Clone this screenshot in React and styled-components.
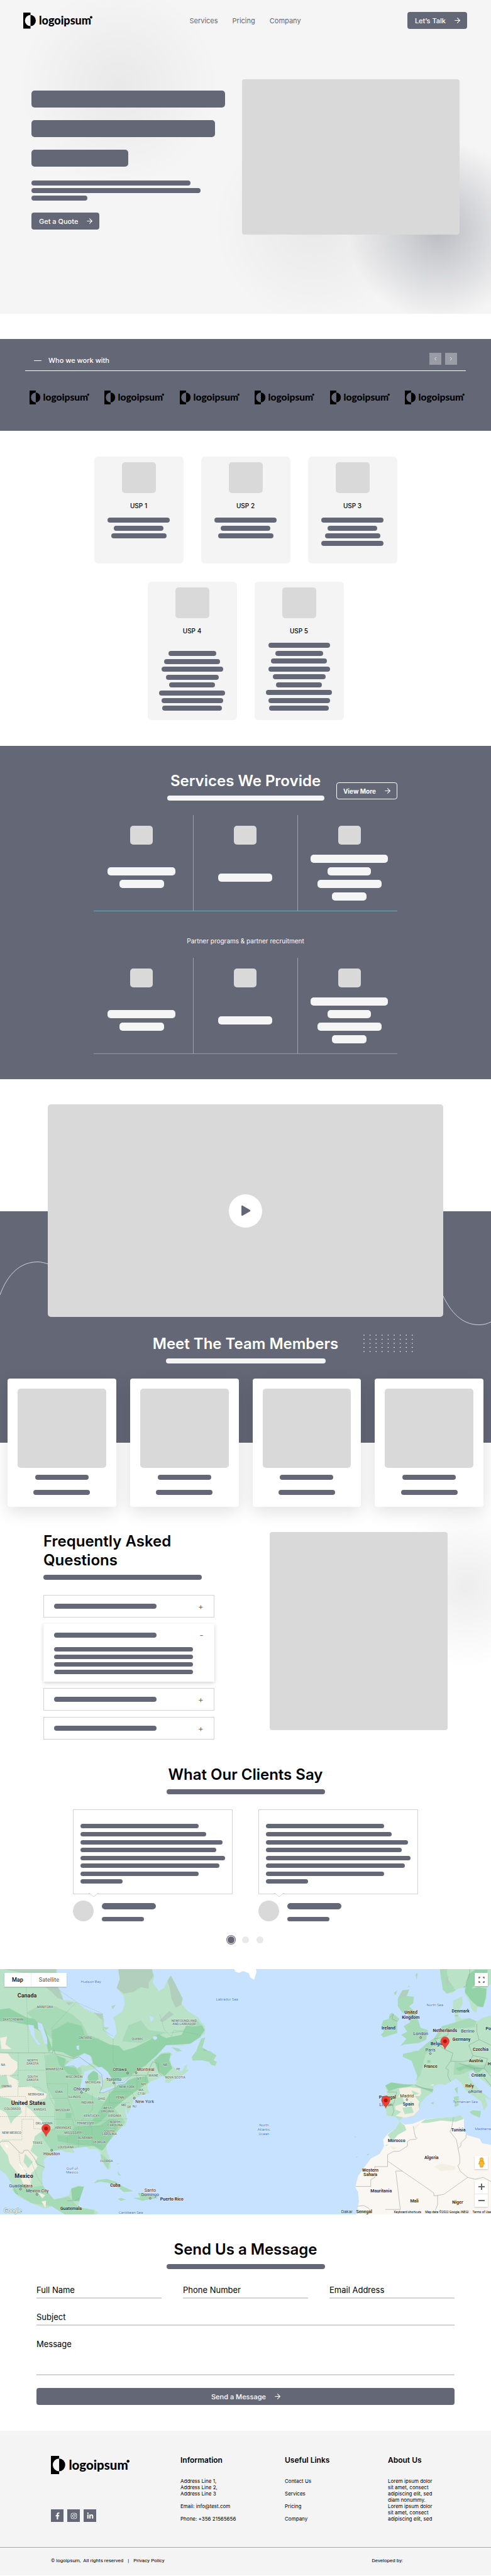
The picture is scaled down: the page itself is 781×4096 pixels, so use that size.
import React from "react";
import styled, { createGlobalStyle } from "styled-components";
import { ArrowRight, ChevronLeft, ChevronRight } from "lucide-react";
import { FaFacebookF, FaInstagram, FaLinkedinIn } from "react-icons/fa";

const slate = "#646776";
const grey = "#d9d9d9";
const mist = "#f5f5f5";
const rule = "#d3d3d3";

const GlobalStyle = createGlobalStyle`
  *, *::before, *::after { box-sizing: border-box; }
  body { margin: 0; background: #fff; color: #000; font-family: Inter, "Liberation Sans", sans-serif; }
  h2, h3, p, ul { margin: 0; padding: 0; }
  ul { list-style: none; }
  button, input, textarea { font: inherit; }
  a { color: inherit; text-decoration: none; }
`;

/* Shared parts */

const Bar = styled.span`
  display: block;
  flex: none;
  width: ${(p) => p.$w}px;
  max-width: 100%;
  height: ${(p) => p.$h || 8}px;
  border-radius: ${(p) => p.$r || 4}px;
  background: ${(p) => (p.$light ? mist : slate)};
`;

const BarStack = styled.div`
  display: flex;
  flex-direction: column;
  justify-content: space-between;
  align-items: ${(p) => (p.$center ? "center" : "flex-start")};
  height: ${(p) => p.$height}px;
  margin-top: ${(p) => p.$top || 0}px;
`;

const Button = styled.button`
  display: inline-flex;
  align-items: center;
  justify-content: center;
  gap: 12px;
  width: ${(p) => (p.$wide ? "100%" : "auto")};
  height: 27px;
  padding: 0 ${(p) => (p.$outline ? 8 : 9)}px 0 ${(p) => (p.$outline ? 10 : 12)}px;
  border: ${(p) => (p.$outline ? "1px solid #fff" : "0")};
  border-radius: 4px;
  background: ${slate};
  color: #fff;
  font-size: ${(p) => (p.$outline ? 10 : 11)}px;
  font-weight: ${(p) => (p.$outline ? 700 : 500)};
  line-height: 14px;
  white-space: nowrap;
`;

const Title = styled.h2`
  font-size: 24px;
  font-weight: 600;
  line-height: 30px;
`;

const Heading = styled.div`
  position: relative;
  display: flex;
  flex-direction: column;
  align-items: ${(p) => (p.$left ? "flex-start" : "center")};
  gap: 8px;
  color: ${(p) => (p.$light ? "#fff" : "#000")};
  text-align: ${(p) => (p.$left ? "left" : "center")};
`;

const LogoSvg = styled.svg`
  display: block;
  width: ${(p) => p.$w}px;
  height: auto;
`;

function Logo({ width }) {
  return (
    <LogoSvg $w={width} viewBox="0 0 110 26" role="img" aria-label="logoipsum">
      <path d="M0 0H11.5V3.8A8.9 8.9 0 0 0 11.5 21.6V25.5H0Z" />
      <path d="M11.5 3.8A8.5 8.9 0 0 1 11.5 21.6Z" />
      <text x="25" y="19" fontFamily="Lato, sans-serif" fontWeight="900" fontSize="18">
        logoipsum
      </text>
      <circle cx="108" cy="7.500" r="2" />
    </LogoSvg>
  );
}

/* Hero */

const Hero = styled.div`
  padding: 19px 38px 126px 37px;
  background:
    radial-gradient(circle 160px at calc(100% - 84px) 366px, rgba(100, 103, 118, 0.4), rgba(100, 103, 118, 0.2) 45%, rgba(100, 103, 118, 0) 90%),
    radial-gradient(circle 160px at 64% 356px, rgba(0, 0, 0, 0.05), rgba(0, 0, 0, 0)),
    radial-gradient(circle 160px at 189px 137px, rgba(0, 0, 0, 0.05), rgba(0, 0, 0, 0)),
    ${mist};
`;

const Header = styled.header`
  display: grid;
  grid-template-columns: 1fr auto 1fr;
  align-items: center;
`;

const Nav = styled.nav`
  display: flex;
  gap: 23px;
  color: ${slate};
  font-size: 11px;
  line-height: 14px;
`;

const HeaderAction = styled.div`
  justify-self: end;
`;

const HeroBody = styled.section`
  display: grid;
  grid-template-columns: 309fr 346fr;
  gap: 26px;
  padding: 80px 12px 0 13px;
`;

const HeroCopy = styled.div`
  padding-top: 18px;
`;

const HeroLines = styled.div`
  display: flex;
  flex-direction: column;
  gap: 20px;
  margin-bottom: 22px;
`;

const HeroAction = styled.div`
  margin-top: 19px;
`;

const Placeholder = styled.div`
  height: ${(p) => p.$h}px;
  border-radius: 4px;
  background: ${grey};
`;

/* Partner strip */

const Partners = styled.section`
  margin-top: 40px;
  padding: 22px 40px 42px;
  background: ${slate};
`;

const PartnersHead = styled.div`
  display: flex;
  align-items: flex-end;
  justify-content: space-between;
  padding: 0 14px 9px;
  border-bottom: 1px solid #fff;
`;

const PartnersTitle = styled.h3`
  display: flex;
  align-items: center;
  gap: 11px;
  color: #fff;
  font-size: 11px;
  font-weight: 500;
  line-height: 14px;

  &::before {
    content: "";
    width: 12px;
    height: 1px;
    background: #fff;
  }
`;

const Pager = styled.div`
  display: flex;
  gap: 6px;
`;

const PagerButton = styled.button`
  display: grid;
  place-items: center;
  width: 19px;
  height: 19px;
  padding: 0;
  border: 0;
  background: #999ba5;
  color: #fff;
`;

const LogoRow = styled.div`
  display: flex;
  justify-content: space-between;
  margin: 31px 2px 0 7px;
`;

/* Selling points */

const Usps = styled.section`
  display: flex;
  flex-direction: column;
  gap: 29px;
  padding: 41px 0;
`;

const UspRow = styled.div`
  display: flex;
  justify-content: center;
  gap: 28px;
`;

const UspCard = styled.article`
  display: flex;
  flex-direction: column;
  align-items: center;
  width: 142px;
  height: ${(p) => p.$h}px;
  padding-top: 9px;
  border-radius: 6px;
  background: #f4f4f4;
`;

const UspIcon = styled.div`
  width: 54px;
  height: 49px;
  border-radius: 5px;
  background: ${grey};
`;

const UspTitle = styled.h3`
  margin-top: 13px;
  font-size: 10px;
  font-weight: 500;
  line-height: 14px;
`;

function Usp({ name, height, stack, top = 12, bars }) {
  return (
    <UspCard $h={height}>
      <UspIcon />
      <UspTitle>{name}</UspTitle>
      <BarStack $center $height={stack} $top={top}>
        {bars.map((w, i) => (
          <Bar key={i} $w={w} />
        ))}
      </BarStack>
    </UspCard>
  );
}

/* Services */

const Services = styled.section`
  padding: 41px 149px 40px;
  background: ${slate};
`;

const ServicesHead = styled.div`
  display: grid;
  grid-template-columns: 1fr auto 1fr;
  align-items: end;
`;

const ServicesAction = styled.div`
  grid-column: 3;
  justify-self: end;
  margin-bottom: 2px;
`;

const ServicesCenter = styled.div`
  grid-column: 2;
`;

const ServiceGrid = styled.div`
  display: grid;
  grid-template-columns: 1fr 1px 1fr 1px 1fr;
  gap: 6px;
  height: 153px;
  margin-top: ${(p) => p.$top}px;
  border-bottom: 1px solid #76a6b6;
`;

const Divider = styled.span`
  background: #78b3c0;
`;

const ServiceCell = styled.div`
  display: flex;
  flex-direction: column;
  align-items: center;
  gap: 14px;
  padding-top: 17px;
`;

const ServiceIcon = styled.div`
  width: 36px;
  height: 30px;
  border-radius: 5px;
  background: ${grey};
`;

const ServiceBars = styled.div`
  display: flex;
  flex-direction: column;
  align-items: center;
  justify-content: center;
  gap: 7px;
  height: 76px;
`;

const ServiceNote = styled.p`
  margin-top: 40px;
  color: #fff;
  font-size: 10px;
  line-height: 14px;
  text-align: center;
`;

const serviceColumns = [[108, 71], [86], [123, 69, 102, 55]];

function ServiceTable({ top }) {
  return (
    <ServiceGrid $top={top}>
      {serviceColumns.map((bars, i) => (
        <React.Fragment key={i}>
          {i > 0 && <Divider />}
          <ServiceCell>
            <ServiceIcon />
            <ServiceBars>
              {bars.map((w, j) => (
                <Bar key={j} $w={w} $h={13} $r={5} $light />
              ))}
            </ServiceBars>
          </ServiceCell>
        </React.Fragment>
      ))}
    </ServiceGrid>
  );
}

/* Video and team */

const Showcase = styled.section`
  position: relative;
  padding-top: 40px;
  background: linear-gradient(#fff 210px, ${slate} 210px, ${slate} 578px, #fff 578px);
`;

const Curve = styled.svg`
  position: absolute;
  top: ${(p) => p.$top}px;
  ${(p) => p.$side}: 0;
  width: 77px;
  height: 56px;
  fill: none;
  stroke: #fff;
  stroke-width: 0.7;
`;

const Video = styled.div`
  position: relative;
  display: grid;
  place-items: center;
  height: 338px;
  margin: 0 76px 28px;
  border-radius: 5px;
  background: ${grey};
`;

const PlayButton = styled.button`
  display: grid;
  place-items: center;
  width: 53px;
  height: 53px;
  padding: 0;
  border: 0;
  border-radius: 50%;
  background: #fff;
`;

const DotField = styled.svg`
  position: absolute;
  top: 0;
  left: calc(50% + 187px);
  width: 80px;
  height: 28px;
  fill: #fff;
`;

const Team = styled.div`
  display: grid;
  grid-template-columns: repeat(4, 1fr);
  gap: 22px;
  margin-top: 24px;
  padding: 0 12px;
`;

const Member = styled.article`
  display: flex;
  flex-direction: column;
  align-items: center;
  height: 204px;
  padding: 16px;
  border-radius: 4px;
  background: #fff;
  box-shadow: 0 8px 28px rgba(0, 0, 0, 0.12);
`;

const Portrait = styled.div`
  width: 100%;
  height: 126px;
  margin-bottom: 11px;
  border-radius: 5px;
  background: ${grey};
`;

const MemberLines = styled.div`
  display: flex;
  flex-direction: column;
  align-items: center;
  gap: 16px;
`;

/* Questions */

const Faq = styled.section`
  display: grid;
  grid-template-columns: 272fr 284fr;
  gap: 88px;
  padding: 40px 69px 0;
  background: radial-gradient(circle 130px at calc(100% - 39px) 126px, rgba(0, 0, 0, 0.07), rgba(0, 0, 0, 0));
`;

const FaqList = styled.div`
  display: flex;
  flex-direction: column;
  gap: 10px;
  margin-top: 24px;
`;

const FaqItem = styled.div`
  height: ${(p) => (p.$open ? 92 : 36)}px;
  border: 1px solid ${(p) => (p.$open ? "#fff" : rule)};
  background: #fff;
  box-shadow: ${(p) => (p.$open ? "0 2px 6px rgba(0, 0, 0, 0.18)" : "none")};
`;

const FaqToggle = styled.button`
  display: flex;
  align-items: center;
  justify-content: space-between;
  width: 100%;
  height: 34px;
  padding: 0 16px;
  border: 0;
  background: none;
  color: ${slate};
  font-size: 13px;
  line-height: 14px;
`;

const FaqBody = styled.div`
  padding: 2px 16px 0;
`;

/* Clients */

const Clients = styled.section`
  padding-top: 41px;
`;

const Quotes = styled.div`
  display: grid;
  grid-template-columns: 1fr 1fr;
  gap: 41px;
  margin-top: 24px;
  padding: 0 116px;
`;

const QuoteBox = styled.div`
  position: relative;
  height: 135px;
  padding: 22px 11px 0;
  border: 1px solid ${rule};
`;

const QuoteTail = styled.svg`
  position: absolute;
  left: 24px;
  bottom: -6px;
  width: 16px;
  height: 7px;
`;

const Author = styled.div`
  display: flex;
  align-items: center;
  gap: 13px;
  margin-top: 10px;
`;

const Avatar = styled.div`
  width: 33px;
  height: 33px;
  border-radius: 50%;
  background: ${grey};
`;

const AuthorLines = styled.div`
  display: flex;
  flex-direction: column;
  gap: 12px;
  padding-top: 4px;
`;

const Dots = styled.div`
  display: flex;
  align-items: center;
  justify-content: center;
  gap: 12px;
  height: 14px;
  margin: 22px 0 40px;
`;

const Dot = styled.button`
  width: 11px;
  height: 11px;
  padding: 0;
  border: 0;
  border-radius: 50%;
  background: ${(p) => (p.$active ? slate : "#e9e9e9")};
  box-shadow: ${(p) => (p.$active ? `0 0 0 1px #fff, 0 0 0 2px ${slate}` : "none")};
`;

const quoteBars = [188, 200, 226, 216, 230, 221, 188, 67];

function Quote() {
  return (
    <article>
      <QuoteBox>
        <BarStack $height={95}>
          {quoteBars.map((w, i) => (
            <Bar key={i} $w={w} $h={7} />
          ))}
        </BarStack>
        <QuoteTail viewBox="0 0 16 7">
          <path d="M1 0H15L8 6Z" fill="#fff" />
          <path d="M0 .5H1.5L8 6L14.500 .5H16" fill="none" stroke={rule} />
        </QuoteTail>
      </QuoteBox>
      <Author>
        <Avatar />
        <AuthorLines>
          <Bar $w={86} $h={10} $r={5} />
          <Bar $w={67} $h={7} />
        </AuthorLines>
      </Author>
    </article>
  );
}

/* Map */

const MapFrame = styled.section`
  position: relative;
  aspect-ratio: 781 / 390;
  background: #c6e2ff;
  font-family: Roboto, sans-serif;
`;

const MapCanvas = styled.svg`
  display: block;
  width: 100%;
  height: 100%;
`;

const MapTypes = styled.div`
  position: absolute;
  top: 6px;
  left: 7px;
  display: flex;
  background: #fff;
  box-shadow: 0 1px 2px rgba(0, 0, 0, 0.2);
`;

const MapType = styled.button`
  height: 22px;
  padding: 0 12px;
  border: 0;
  border-left: ${(p) => (p.$active ? "0" : "1px solid #eee")};
  background: #fff;
  color: ${(p) => (p.$active ? "#000" : "#565656")};
  font-size: 9px;
  font-weight: ${(p) => (p.$active ? 500 : 400)};
`;

const MapTools = styled.div`
  position: absolute;
  top: ${(p) => p.$top};
  right: 5px;
  display: flex;
  flex-direction: column;
  box-shadow: 0 1px 2px rgba(0, 0, 0, 0.2);
`;

const MapTool = styled.button`
  display: grid;
  place-items: center;
  width: 21px;
  height: 21px;
  padding: 0;
  border: 0;
  background: #fff;
  color: #666;

  & + & {
    border-top: 1px solid #e6e6e6;
  }
`;

const MapCredits = styled.div`
  position: absolute;
  right: 0;
  bottom: 0;
  display: flex;
  gap: 6px;
  padding-left: 2px;
  background: rgba(245, 245, 245, 0.7);
  font-size: 5px;
  line-height: 7px;
`;

// Two drawing sheets: the Americas on the left, Europe and Africa on the right.
const sheets = {
  w: (x, y) => [x * 0.2491, (y - 16) * 0.2524],
  e: (x, y) => [542.4 + x * 0.1808, (y - 16) * 0.2524],
};

const labelStyles = {
  big: { fontSize: 9, fontWeight: 700, fill: "#222" },
  country: { fontSize: 7, fontWeight: 700, fill: "#333" },
  city: { fontSize: 7, fontWeight: 400, fill: "#333" },
  state: { fontSize: 5, fontWeight: 500, fill: "#66766d" },
  sea: { fontSize: 6, fontWeight: 400, fill: "#3f78cf" },
};

const mapLabels = [
  ["w", "big", 173, 183, "Canada"],
  ["w", "big", 181, 860, "United States"],
  ["w", "big", 153, 1318, "Mexico"],
  ["w", "sea", 580, 92, "Hudson Bay"],
  ["w", "sea", 1450, 203, "Labrador Sea"],
  ["w", "sea", 461, 1269, "Gulf of"],
  ["w", "sea", 461, 1292, "Mexico"],
  ["w", "sea", 835, 1548, "Caribbean Sea"],
  ["w", "sea", 1685, 997, "North"],
  ["w", "sea", 1685, 1024, "Atlantic"],
  ["w", "sea", 1685, 1051, "Ocean"],
  ["w", "state", 287, 254, "MANITOBA"],
  ["w", "state", 83, 334, "SKATCHEWAN"],
  ["w", "state", 545, 447, "ONTARIO"],
  ["w", "state", 879, 455, "QUEBEC"],
  ["w", "state", 1175, 340, "NEWFOUNDLAND"],
  ["w", "state", 1175, 360, "AND LABRADOR"],
  ["w", "state", 208, 592, "NORTH"],
  ["w", "state", 208, 611, "DAKOTA"],
  ["w", "state", 208, 694, "SOUTH"],
  ["w", "state", 208, 713, "DAKOTA"],
  ["w", "state", 20, 620, "NA"],
  ["w", "state", 42, 754, "OMING"],
  ["w", "state", 348, 645, "MINNESOTA"],
  ["w", "state", 473, 695, "WISCONSIN"],
  ["w", "state", 593, 728, "MICHIGAN"],
  ["w", "state", 230, 804, "NEBRASKA"],
  ["w", "state", 376, 788, "IOWA"],
  ["w", "state", 476, 820, "ILLINOIS"],
  ["w", "state", 558, 857, "INDIANA"],
  ["w", "state", 648, 832, "OHIO"],
  ["w", "state", 767, 825, "PENN"],
  ["w", "state", 810, 757, "NEW YORK"],
  ["w", "state", 890, 707, "VT"],
  ["w", "state", 916, 741, "NH"],
  ["w", "state", 900, 776, "MA"],
  ["w", "state", 903, 801, "CT RI"],
  ["w", "state", 980, 686, "MAINE"],
  ["w", "state", 1055, 620, "NB"],
  ["w", "state", 1138, 644, "PE"],
  ["w", "state", 1119, 696, "NOVA SCOTIA"],
  ["w", "state", 790, 871, "MD"],
  ["w", "state", 825, 883, "DE"],
  ["w", "state", 860, 878, "NJ"],
  ["w", "state", 686, 891, "WEST"],
  ["w", "state", 686, 910, "VIRGINIA"],
  ["w", "state", 732, 941, "VIRGINIA"],
  ["w", "state", 586, 941, "KENTUCKY"],
  ["w", "state", 80, 894, "COLORADO"],
  ["w", "state", 255, 899, "KANSAS"],
  ["w", "state", 401, 905, "MISSOURI"],
  ["w", "state", 282, 985, "OKLAHOMA"],
  ["w", "state", 545, 985, "TENNESSEE"],
  ["w", "state", 735, 978, "NORTH"],
  ["w", "state", 735, 997, "CAROLINA"],
  ["w", "state", 403, 1015, "ARKANSAS"],
  ["w", "state", 468, 1046, "MISSISSIPPI"],
  ["w", "state", 697, 1037, "SOUTH"],
  ["w", "state", 697, 1056, "CAROLINA"],
  ["w", "state", 545, 1079, "ALABAMA"],
  ["w", "state", 633, 1105, "GEORGIA"],
  ["w", "state", 74, 1045, "NEW MEXICO"],
  ["w", "state", 239, 1108, "TEXAS"],
  ["w", "state", 420, 1139, "LOUISIANA"],
  ["w", "state", 681, 1223, "FLORIDA"],
  ["w", "city", 765, 650, "Ottawa"],
  ["w", "city", 930, 649, "Montreal"],
  ["w", "city", 726, 712, "Toronto"],
  ["w", "city", 521, 771, "Chicago"],
  ["w", "city", 924, 851, "New York"],
  ["w", "city", 330, 1179, "Houston"],
  ["w", "city", 133, 1382, "Guadalajara"],
  ["w", "city", 238, 1414, "Mexico City"],
  ["w", "city", 959, 1412, "Santo"],
  ["w", "city", 959, 1438, "Domingo"],
  ["w", "country", 736, 1379, "Cuba"],
  ["w", "country", 1097, 1467, "Puerto Rico"],
  ["w", "country", 454, 1526, "Guatemala"],
  ["e", "country", 615, 290, "United"],
  ["e", "country", 613, 320, "Kingdom"],
  ["e", "country", 418, 390, "Ireland"],
  ["e", "country", 1052, 281, "Denmark"],
  ["e", "country", 915, 405, "Netherlands"],
  ["e", "country", 1060, 459, "Germany"],
  ["e", "country", 860, 486, "Belgium"],
  ["e", "country", 1228, 525, "Czechia"],
  ["e", "country", 1187, 595, "Austria"],
  ["e", "country", 789, 630, "France"],
  ["e", "country", 1210, 684, "Croatia"],
  ["e", "country", 1130, 754, "Italy"],
  ["e", "country", 409, 824, "Portugal"],
  ["e", "country", 593, 868, "Spain"],
  ["e", "country", 1032, 1032, "Tunisia"],
  ["e", "country", 489, 1098, "Morocco"],
  ["e", "country", 796, 1203, "Algeria"],
  ["e", "country", 258, 1283, "Western"],
  ["e", "country", 258, 1312, "Sahara"],
  ["e", "country", 353, 1414, "Mauritania"],
  ["e", "country", 646, 1476, "Mali"],
  ["e", "country", 1026, 1487, "Niger"],
  ["e", "country", 203, 1544, "Senegal"],
  ["e", "country", 1296, 391, "Po"],
  ["e", "country", 1305, 615, "H"],
  ["e", "city", 702, 425, "London"],
  ["e", "city", 1104, 407, "Berlin"],
  ["e", "city", 787, 526, "Paris"],
  ["e", "city", 580, 817, "Madrid"],
  ["e", "city", 1192, 790, "Rome"],
  ["e", "city", 395, 870, "Lisbon"],
  ["e", "city", 52, 1544, "Dakar"],
  ["e", "sea", 826, 239, "North Sea"],
  ["e", "sea", 1093, 849, "Tyrrhenian Sea"],
  ["e", "sea", 1248, 1019, "Mediterra"],
];

const cities = [
  ["w", 815, 671], ["w", 869, 669], ["w", 727, 733], ["w", 521, 792], ["w", 858, 829],
  ["w", 330, 1157], ["w", 131, 1402], ["w", 236, 1435], ["w", 959, 1460],
  ["e", 701, 447], ["e", 1163, 408], ["e", 786, 548], ["e", 580, 838], ["e", 1130, 790],
];

const pins = [["w", 294, 1071], ["e", 915, 521], ["e", 394, 893]];

const line = { fill: "none", stroke: "#8fa79a", strokeWidth: 0.7, vectorEffect: "non-scaling-stroke" };
const dashed = { ...line, stroke: "#8bb09a", strokeWidth: 0.5, strokeDasharray: "2 1" };

function WorldMap() {
  return (
    <MapCanvas viewBox="0 0 781 390" preserveAspectRatio="xMidYMid slice" role="img" aria-label="Office locations">
      <rect width="781" height="390" fill="#c6e2ff" />
      <g transform="translate(0 -4) scale(.2491 .2524)">
        <path fill="#b9e2c7" d="M0 16H362L372 132L386 150L404 210L440 213L490 225L540 265L600 290L655 298L665 340L662 385L690 430L722 455L745 415L735 350L722 320L780 285L797 240L790 185L745 135L765 80L755 16H970L985 60L975 100L1015 155L1045 135L1070 90L1090 55L1120 110L1140 150L1168 200L1160 235L1200 280L1265 320L1285 350L1308 375L1310 420L1270 450L1215 485L1160 497L1060 495L1030 520L1000 560L960 590L930 622L985 580L1030 545L1075 535L1100 550L1085 580L1095 620L1130 655L1165 660L1178 625L1195 618L1190 650L1210 650L1160 690L1100 715L1075 735L1052 725L1060 700L1035 688L1000 710L960 725L940 745L942 770L955 795L900 812L860 830L838 880L830 905L815 930L800 880L803 925L812 965L800 1000L760 1025L735 1055L700 1080L677 1120L685 1170L705 1220L705 1270L690 1282L665 1250L645 1210L645 1175L620 1150L580 1150L545 1135L500 1140L465 1150L475 1172L420 1170L390 1155L345 1165L310 1190L280 1215L285 1265L270 1300L272 1370L300 1430L345 1465L400 1455L440 1440L455 1395L500 1380L540 1385L520 1430L505 1480L500 1515L560 1525L600 1530L630 1550L600 1570H430L380 1540L330 1510L290 1525L200 1490L120 1450L80 1410L75 1370L40 1310L0 1280Z" />
        <path fill="#a7dab6" d="M170 290L260 240L350 250L460 300L520 350L560 430L640 455L560 480L335 460L250 370ZM260 1060L360 1010L350 850L300 760L290 560L340 545L520 640L520 780L620 830L720 880L800 980L680 1120L500 1140L330 1160ZM80 1380L200 1390L272 1380L345 1468L440 1450L500 1515L600 1535L600 1570H430L330 1510L200 1490L90 1420ZM640 1180L660 1190L700 1225L690 1275L650 1220ZM820 370L900 340L950 400L1100 420L1240 400L1300 380L1250 330L1170 400L1050 420L900 480L780 470Z" />
        <path fill="#92d2a6" d="M335 400L380 380L430 350L520 372L540 430L600 450L640 462L700 490L760 500L790 530L860 510L960 460L1010 425L1060 450L1160 430L1190 370L1230 380L1290 370L1308 400L1270 450L1215 485L1060 495L1000 560L930 622L870 660L830 690L770 700L720 715L700 680L640 640L595 612L585 570L540 545L470 575L400 540L335 530ZM0 270L60 262L130 300L170 320L220 330L290 400L335 520L310 540L280 420L190 370L90 350L0 345ZM360 560L420 580L410 625L480 640L515 690L440 680L380 620ZM560 690L590 655L625 670L628 710L590 735L565 720ZM700 800L760 740L860 700L940 690L950 730L860 790L780 850L720 900L640 980L560 1010L640 900ZM985 590L1030 550L1090 545L1080 590L1100 640L1050 690L1010 660ZM480 1010L640 1000L700 960L780 975L720 1060L670 1140L650 1160L600 1130L520 1125L430 1110L370 1100L365 1065L430 1070ZM420 920L460 925L455 955L420 955ZM455 1400L500 1385L535 1388L505 1480L460 1470ZM80 1380L120 1440L100 1430ZM1285 455L1310 448L1290 510L1335 535L1375 560L1360 590L1300 560L1260 570L1255 530Z" />
        <path fill="#b2cfbe" d="M755 16H970L980 60L950 100L950 140L900 130L850 160L790 170L745 135L765 80ZM1090 55L1120 110L1165 200L1158 240L1120 260L1095 200L1085 140L1070 90ZM290 128H370L404 210L370 200L330 160ZM600 290L655 298L650 335L620 310ZM420 225L470 225L440 245ZM1020 340L1080 280L1110 300L1040 350ZM20 16H360V50L250 60Z" />
        <path fill="#f4efe3" d="M0 543L50 548L75 580L110 600L112 640L90 670L60 690L120 720L118 760L200 753L250 785L300 800L290 830L220 850L165 880L200 905L235 945L270 975L290 1010L262 1040L222 1070L212 1120L195 1160L240 1200L225 1230L240 1258L215 1290L200 1300L198 1380L150 1370L120 1310L62 1240L50 1190L20 1150L0 1120ZM0 450L45 440L35 490L75 520L10 520ZM240 1420L290 1440L270 1460ZM265 1480L295 1475L290 1520Z" />
        <path fill="#b9e2c7" d="M0 820L60 830L120 860L140 920L90 960L70 990L40 920L0 900ZM160 1180L210 1230L180 1270L150 1230ZM0 690L40 680L60 760L0 770Z" />
        <path fill="#fff" d="M30 1110L55 1135L40 1140ZM120 1240L165 1275L140 1280Z" />
        <path fill="#c6e2ff" d="M410 628L440 600L500 568L540 548L575 560L590 605L555 625L520 620L495 642L470 622ZM540 662L575 652L610 645L565 680L548 720L545 780L520 797L514 750L530 700ZM600 638L650 632L690 665L712 712L680 700L655 720L655 765L640 745L645 690L610 660ZM635 785L665 770L740 750L700 785L650 800ZM730 733L790 718L840 688L800 737L740 745ZM240 350L268 362L300 450L303 490L285 485L262 410L245 395ZM180 365L215 370L225 450L260 490L240 490L200 430ZM488 500L505 495L505 525L490 520ZM980 440A13 13 0 1 0 1000 440ZM955 310L985 325L965 350Z" />
        <path fill="#a7dab6" d="M1310 448L1285 455L1255 530L1225 570L1230 592L1290 590L1335 600L1350 620L1375 625L1385 600L1365 590L1382 560L1340 532L1300 530L1290 500ZM1095 508L1140 515L1162 532L1130 535ZM600 1365L620 1345L680 1337L740 1355L785 1385L852 1415L790 1420L760 1395L690 1362L640 1355ZM848 1458L895 1455L880 1425L950 1430L1012 1460L960 1465L910 1475ZM752 1464L775 1458L805 1468L770 1476ZM710 250L740 240L720 268ZM660 380L695 385L675 400ZM745 1240L765 1243L750 1246ZM750 1290L775 1320L755 1310ZM1060 1460L1090 1465L1060 1470Z" />
        <path {...line} d="M0 543H335L345 525L352 550L400 560L470 580L505 568L600 635L650 680L655 750L635 795L660 795L735 765V735L790 730L840 685H940L955 640L975 600L1010 610L1015 670L1035 690M0 1110L8 1100H55L130 1175H145L155 1157H180L215 1200L240 1245L285 1265M430 1475H480L505 1460" />
        <path {...dashed} d="M167 130L183 543M335 543L332 385L485 225M722 455V600L760 660M380 150L500 230L655 296L660 400L722 440M117 543L115 815M117 653H290M0 685H117M117 755L250 760L300 800M0 818H165V945H350V1030L215 1020V962H140V1092H8M165 945H0M300 738H432V830H320M285 545L300 738L320 830L350 880V945M432 830L460 900L480 970M480 970H650L812 958M350 962H465L470 1005H660M502 1005V1140M590 1120L650 1130M585 1005L590 1120M365 1062H430V1120H500M590 800V900L520 970M697 788V858H830M697 788H840L860 830M875 685V780M930 685V745M1020 300L1050 400L1095 440L1110 400L1280 430V450M120 1170L130 1240L170 1300L200 1370M200 1230L240 1330L270 1370" />
      </g>
      <path fill="#fff" d="M373 0H407L408 5L404 17L398 13L396 7L387 3L380 6L374 4Z" />
      <g transform="translate(542.4 -4) scale(.1808 .2524)">
        <path fill="#b9e2c7" d="M870 16H1330V100L1285 130L1280 200L1250 260L1200 255L1190 295L1150 270L1130 220L1090 170L1085 130L1030 140L980 165L930 170L895 145L905 110L880 80ZM985 215L1065 188L1070 235L1045 265L1030 310L1060 330L1130 325L1200 345L1240 325L1330 305V770L1270 730L1200 690L1160 655L1125 670L1130 700L1190 755L1240 790L1330 842L1265 825L1292 875L1255 905L1235 850L1160 812L1100 782L1055 730L1010 705L965 725L920 745L870 740L815 752L810 790L750 820L700 860L692 900L640 945L550 945L515 970L470 945L402 940L395 900L402 850L405 790L390 750L440 730L560 742L660 740L672 690L660 640L620 592L545 570L550 550L630 560L625 530L680 530L760 510L765 480L820 450L890 375L1010 358L1000 300L985 270Z" />
        <path fill="#a7dab6" d="M600 145L580 185L642 190L635 230L600 252L650 280L680 340L700 385L765 400L750 460L690 480L560 490L520 502L575 455L530 430L582 410L550 375L610 350L590 300L540 290L500 250V200L540 150ZM430 300L450 290L515 330L495 350V420L440 430L375 447L350 430L378 410L352 385L370 340L420 330ZM545 550L680 530L760 480L820 450L890 375L1130 325L1190 345L1180 380L900 400L840 470L740 560L700 680L660 720L672 690L620 592L545 570ZM1130 915L1160 905L1232 910L1222 952L1150 930ZM992 820L1035 815V875L1000 885ZM998 770L1028 758L1025 805ZM655 50L675 40L665 80ZM590 120L605 125L595 130ZM1000 600L1130 620L1250 620L1330 600V680L1260 650L1150 650L1050 680L990 680ZM870 16H930L940 80L1010 150L930 170L895 145ZM790 860L820 850L812 870ZM225 1185L245 1178L240 1190ZM85 1188L100 1192L90 1190ZM130 1200L150 1195L140 1202ZM118 1072H132V1076H118Z" />
        <path fill="#92d2a6" d="M1120 50L1180 20H1290L1270 110L1200 90L1150 140L1210 130L1280 140L1275 190L1250 255L1200 250L1140 210L1090 160ZM1010 640L1130 615L1230 640L1200 660L1100 640L1040 660ZM1170 640H1250L1220 665H1190ZM390 750L440 730L560 742L640 745L600 755L500 765L420 785ZM760 590H785V605H760ZM640 750L810 778L800 790L700 765Z" />
        <path fill="#b2cfbe" d="M540 150L600 145L570 190L510 200ZM465 165L495 150L480 180ZM920 80L945 60V125L930 120Z" />
        <path fill="#f4efe3" d="M510 768L600 760L700 768L705 800L690 815L645 815L690 850L680 870L690 900L640 940L560 952L480 940L530 915L480 900L475 880L560 860L540 820L500 825L520 800ZM780 748L820 740L810 750Z" />
        <path fill="#b9e2c7" d="M620 780L690 800L640 810ZM540 890L620 880L640 920L560 930Z" />
        <path fill="#faf7f2" d="M515 975L560 995L630 990L740 960L850 955L990 950L1050 938L1082 960V1010L1100 1060L1220 1085L1240 1112L1330 1125V1570H130L158 1480L150 1420L125 1390L150 1320L210 1260L260 1210L340 1180L380 1130L370 1090L410 1055L480 1020Z" />
        <path fill="#b9e2c7" d="M515 975L560 1000L575 1030L500 1060L450 1100L410 1060L480 1020ZM700 985L740 963L850 955L990 948L1050 936L1082 960L1010 978L880 970L760 985ZM390 1125L415 1120L400 1130Z" />
        <path fill="#f4efe3" d="M820 1260L880 1240L1010 1260L1000 1280L880 1290ZM430 1130L500 1140L460 1155ZM640 1005L700 985L650 1030Z" />
        <path {...line} stroke="#a9a9a6" d="M635 1005L655 1075L670 1080L660 1088L612 1090L585 1102V1130L515 1163L460 1165L410 1185V1260H297V1328L262 1342V1385H128M410 1225L745 1390L815 1425L820 1445L905 1435L1115 1328L1050 1290L1028 1255L1045 1240V1200L1028 1140L1015 1090L960 1040L975 1010L990 950M540 1288H482L522 1530H390M850 1442V1500L830 1535M1115 1328L1180 1340L1250 1328L1330 1358M1100 1060V1080L1055 1110V1130L1030 1145M145 1510L200 1505L240 1520L270 1550" />
        <path {...line} d="M650 745L720 765L810 775M820 455L870 500L920 525L985 545L965 595L920 640L945 650L940 690L965 725M950 380L940 430L870 450L820 455M1195 360V410L1215 460L1125 495L1160 560L1140 590L1060 600L965 595M1215 460L1330 500M1160 560L1290 580L1260 640L1170 640L1040 610M1260 640L1330 700M1170 640L1180 665L1250 690L1330 760M405 790L490 790L470 850L455 880L465 910L450 940M430 320L460 300L450 330L495 345M1135 16L1130 60L1105 90L1100 125L1075 130M1000 310H1030" />
      </g>
      <g textAnchor="middle" dominantBaseline="central" paintOrder="stroke" stroke="rgba(255,255,255,.55)" strokeWidth="1">
        {mapLabels.map(([sheet, kind, x, y, text], i) => {
          const [px, py] = sheets[sheet](x, y);
          return (
            <text key={i} x={px} y={py} {...labelStyles[kind]}>
              {text}
            </text>
          );
        })}
      </g>
      {cities.map(([sheet, x, y], i) => {
        const [px, py] = sheets[sheet](x, y);
        return <circle key={i} cx={px} cy={py} r="1.400" fill="#dfe9e2" stroke="#444" strokeWidth=".8" />;
      })}
      {pins.map(([sheet, x, y], i) => {
        const [px, py] = sheets[sheet](x, y);
        return (
          <g key={i} transform={`translate(${px} ${py})`}>
            <path d="M0 0C-1.200-5-6.800-8-6.800-13A6.800 6.800 0 1 1 6.800-13C6.800-8 1.200-5 0 0Z" fill="#ea4335" stroke="#c5362b" strokeWidth=".5" />
            <circle cy="-12.700" r="3" fill="#b11313" />
          </g>
        );
      })}
      <text x="6" y="387" fontSize="9" fontWeight="500" fill="#fff" stroke="#7f9487" strokeWidth="1" paintOrder="stroke">
        Google
      </text>
    </MapCanvas>
  );
}

/* Contact form */

const Contact = styled.form`
  padding: 41px 58px;
`;

const Fields = styled.div`
  display: grid;
  grid-template-columns: repeat(3, 1fr);
  gap: 21px 34px;
  margin: 25px 0 20px;
`;

const Field = styled.div`
  display: grid;
  grid-column: ${(p) => (p.$full ? "1 / -1" : "auto")};

  label,
  input,
  textarea {
    grid-area: 1 / 1;
  }

  label {
    align-self: start;
    font-size: 13px;
    line-height: 16px;
    pointer-events: none;
  }

  input,
  textarea {
    width: 100%;
    height: ${(p) => (p.$tall ? 58 : 22)}px;
    padding: 0;
    border: 0;
    border-bottom: 2px solid ${rule};
    border-radius: 0;
    background: none;
    resize: none;
    outline: none;
  }
`;

/* Footer */

const Footer = styled.footer`
  background: #f4f4f4;
`;

const FooterGrid = styled.div`
  display: grid;
  grid-template-columns: 206fr 166fr 164fr 83fr;
  padding: 39px 81px 40px;
`;

const Brand = styled.div`
  display: flex;
  flex-direction: column;
  justify-content: space-between;
  padding-top: 1px;
`;

const Social = styled.div`
  display: flex;
  gap: 6px;
`;

const SocialLink = styled.a`
  display: grid;
  place-items: center;
  width: 20px;
  height: 20px;
  background: ${slate};
  color: #fff;
  font-size: 11px;
`;

const FooterTitle = styled.h3`
  margin-bottom: 20px;
  font-size: 12px;
  font-weight: 600;
  line-height: 16px;
  white-space: nowrap;
`;

const FooterText = styled.p`
  margin-bottom: 10px;
  font-size: 8px;
  line-height: 10px;
  white-space: nowrap;

  &:last-child {
    margin-bottom: 0;
  }
`;

const FooterLinks = styled.ul`
  display: flex;
  flex-direction: column;
  gap: 10px;
  font-size: 8px;
  line-height: 10px;
`;

const Legal = styled.div`
  display: flex;
  justify-content: space-between;
  padding: 15px 140px 17px 81px;
  border-top: 1px solid #a9a9a9;
  font-family: Roboto, sans-serif;
  font-size: 8px;
  line-height: 12px;
`;

const LegalItems = styled.div`
  display: flex;
  gap: 7px;
`;

const arrow = <ArrowRight size={13} strokeWidth={2} />;
const memberIds = [1, 2, 3, 4];

export default function App() {
  return (
    <>
      <GlobalStyle />
      <Hero>
        <Header>
          <a href="#top"><Logo width={110} /></a>
          <Nav>
            <a href="#services">Services</a>
            <a href="#pricing">Pricing</a>
            <a href="#company">Company</a>
          </Nav>
          <HeaderAction>
            <Button type="button">Let’s Talk {arrow}</Button>
          </HeaderAction>
        </Header>
        <HeroBody>
          <HeroCopy>
            <HeroLines>
              <Bar $w={308} $h={27} $r={5} />
              <Bar $w={292} $h={27} $r={5} />
              <Bar $w={154} $h={27} $r={5} />
            </HeroLines>
            <BarStack $height={32}>
              <Bar $w={253} />
              <Bar $w={269} />
              <Bar $w={89} />
            </BarStack>
            <HeroAction>
              <Button type="button">Get a Quote {arrow}</Button>
            </HeroAction>
          </HeroCopy>
          <Placeholder $h={247} />
        </HeroBody>
      </Hero>

      <Partners>
        <PartnersHead>
          <PartnersTitle>Who we work with</PartnersTitle>
          <Pager>
            <PagerButton type="button" aria-label="Previous"><ChevronLeft size={9} /></PagerButton>
            <PagerButton type="button" aria-label="Next"><ChevronRight size={9} /></PagerButton>
          </Pager>
        </PartnersHead>
        <LogoRow>
          {[1, 2, 3, 4, 5, 6].map((n) => (
            <Logo key={n} width={95} />
          ))}
        </LogoRow>
      </Partners>

      <Usps>
        <UspRow>
          <Usp name="USP 1" height={170} stack={33} bars={[99, 79, 88]} />
          <Usp name="USP 2" height={170} stack={33} bars={[99, 79, 88]} />
          <Usp name="USP 3" height={170} stack={45} bars={[99, 79, 88, 99]} />
        </UspRow>
        <UspRow>
          <Usp name="USP 4" height={220} stack={95} top={25} bars={[76, 89, 98, 84, 73, 105, 98, 95]} />
          <Usp name="USP 5" height={220} stack={108} bars={[98, 76, 89, 98, 84, 73, 105, 98, 95]} />
        </UspRow>
      </Usps>

      <Services id="services">
        <ServicesHead>
          <ServicesCenter>
            <Heading $light>
              <Title>Services We Provide</Title>
              <Bar $w={250} $light />
            </Heading>
          </ServicesCenter>
          <ServicesAction>
            <Button type="button" $outline>View More {arrow}</Button>
          </ServicesAction>
        </ServicesHead>
        <ServiceTable top={23} />
        <ServiceNote>Partner programs &amp; partner recruitment</ServiceNote>
        <ServiceTable top={20} />
      </Services>

      <Showcase>
        <Curve $side="left" $top={290} viewBox="0 0 77 56">
          <path d="M0 53C12 20 32 .5 60 .5C66 .5 71 2 77 4" />
        </Curve>
        <Curve $side="right" $top={343} viewBox="0 0 77 56">
          <path d="M0 0C13 28 31 47.500 58 47.500C65 47.500 71 46 77 43" />
        </Curve>
        <Video>
          <PlayButton type="button" aria-label="Play video">
            <svg width="16" height="18" viewBox="0 0 16 18">
              <path d="M1 2.200C1 .8 2 .3 3.200 1.200L14.500 7.800C15.600 8.500 15.600 9.500 14.500 10.200L3.200 16.800C2 17.700 1 17.200 1 15.800Z" fill={slate} />
            </svg>
          </PlayButton>
        </Video>
        <Heading $light>
          <Title>Meet The Team Members</Title>
          <Bar $w={254} $light />
          <DotField viewBox="0 0 80 28">
            {Array.from({ length: 45 }, (_, i) => (
              <circle key={i} cx={1 + (i % 9) * 9.6} cy={1 + Math.floor(i / 9) * 6.5} r=".8" />
            ))}
          </DotField>
        </Heading>
        <Team>
          {memberIds.map((id) => (
            <Member key={id}>
              <Portrait />
              <MemberLines>
                <Bar $w={85} />
                <Bar $w={90} />
              </MemberLines>
            </Member>
          ))}
        </Team>
      </Showcase>

      <Faq>
        <div>
          <Heading $left>
            <Title>Frequently Asked<br />Questions</Title>
            <Bar $w={252} />
          </Heading>
          <FaqList>
            {[false, true, false, false].map((open, i) => (
              <FaqItem key={i} $open={open}>
                <FaqToggle type="button" aria-expanded={open}>
                  <Bar $w={163} />
                  <span>{open ? "-" : "+"}</span>
                </FaqToggle>
                {open && (
                  <FaqBody>
                    <BarStack $height={43}>
                      {[1, 2, 3, 4].map((n) => (
                        <Bar key={n} $w={221} $h={7} />
                      ))}
                    </BarStack>
                  </FaqBody>
                )}
              </FaqItem>
            ))}
          </FaqList>
        </div>
        <Placeholder $h={315} />
      </Faq>

      <Clients>
        <Heading>
          <Title>What Our Clients Say</Title>
          <Bar $w={252} />
        </Heading>
        <Quotes>
          <Quote />
          <Quote />
        </Quotes>
        <Dots>
          <Dot type="button" $active aria-label="Slide 1" />
          <Dot type="button" aria-label="Slide 2" />
          <Dot type="button" aria-label="Slide 3" />
        </Dots>
      </Clients>

      <MapFrame>
        <WorldMap />
        <MapTypes>
          <MapType type="button" $active>Map</MapType>
          <MapType type="button">Satellite</MapType>
        </MapTypes>
        <MapTools $top="6px">
          <MapTool type="button" aria-label="Full screen">
            <svg width="10" height="10" viewBox="0 0 10 10" fill="none" stroke="#666" strokeWidth="1.500">
              <path d="M3 1H1V3M7 1H9V3M1 7V9H3M9 7V9H7" />
            </svg>
          </MapTool>
        </MapTools>
        <MapTools $top="76%">
          <MapTool type="button" aria-label="Street view">
            <svg width="10" height="17" viewBox="0 0 10 17" fill="#fbb829" stroke="#b88217" strokeWidth=".6">
              <path d="M2 6H8L9.500 11H8L7 16H3L2 11H.5Z" />
              <circle cx="5" cy="3.500" r="2.700" />
            </svg>
          </MapTool>
        </MapTools>
        <MapTools $top="86%">
          <MapTool type="button" aria-label="Zoom in">
            <svg width="10" height="10" viewBox="0 0 10 10" stroke="#666" strokeWidth="2"><path d="M0 5H10M5 0V10" /></svg>
          </MapTool>
          <MapTool type="button" aria-label="Zoom out">
            <svg width="10" height="10" viewBox="0 0 10 10" stroke="#666" strokeWidth="2"><path d="M0 5H10" /></svg>
          </MapTool>
        </MapTools>
        <MapCredits>
          <span>Keyboard shortcuts</span>
          <span>Map data ©2022 Google, INEGI</span>
          <a href="#terms">Terms of Use</a>
        </MapCredits>
      </MapFrame>

      <Contact>
        <Heading>
          <Title>Send Us a Message</Title>
          <Bar $w={252} />
        </Heading>
        <Fields>
          <Field>
            <label htmlFor="name">Full Name</label>
            <input id="name" type="text" />
          </Field>
          <Field>
            <label htmlFor="phone">Phone Number</label>
            <input id="phone" type="tel" />
          </Field>
          <Field>
            <label htmlFor="email">Email Address</label>
            <input id="email" type="email" />
          </Field>
          <Field $full>
            <label htmlFor="subject">Subject</label>
            <input id="subject" type="text" />
          </Field>
          <Field $full $tall>
            <label htmlFor="message">Message</label>
            <textarea id="message" />
          </Field>
        </Fields>
        <Button type="button" $wide>Send a Message {arrow}</Button>
      </Contact>

      <Footer>
        <FooterGrid>
          <Brand>
            <Logo width={125} />
            <Social>
              <SocialLink href="#facebook" aria-label="Facebook"><FaFacebookF /></SocialLink>
              <SocialLink href="#instagram" aria-label="Instagram"><FaInstagram /></SocialLink>
              <SocialLink href="#linkedin" aria-label="LinkedIn"><FaLinkedinIn /></SocialLink>
            </Social>
          </Brand>
          <div>
            <FooterTitle>Information</FooterTitle>
            <FooterText>Address Line 1,<br />Address Line 2,<br />Address Line 3</FooterText>
            <FooterText>Email: info@test.com</FooterText>
            <FooterText>Phone: +356 21565656</FooterText>
          </div>
          <div>
            <FooterTitle>Useful Links</FooterTitle>
            <FooterLinks>
              <li><a href="#contact">Contact Us</a></li>
              <li><a href="#services">Services</a></li>
              <li><a href="#pricing">Pricing</a></li>
              <li><a href="#company">Company</a></li>
            </FooterLinks>
          </div>
          <div>
            <FooterTitle>About Us</FooterTitle>
            <FooterText>
              Lorem ipsum dolor<br />sit amet, consect<br />adipiscing elit, sed<br />diam nonummy.<br />
              Lorem ipsum dolor<br />sit amet, consect<br />adipiscing elit, sed
            </FooterText>
          </div>
        </FooterGrid>
        <Legal>
          <LegalItems>
            <span>© logoipsum,&nbsp; All rights reserved</span>
            <span>|</span>
            <a href="#privacy">Privacy Policy</a>
          </LegalItems>
          <span>Developed by:</span>
        </Legal>
      </Footer>
    </>
  );
}
